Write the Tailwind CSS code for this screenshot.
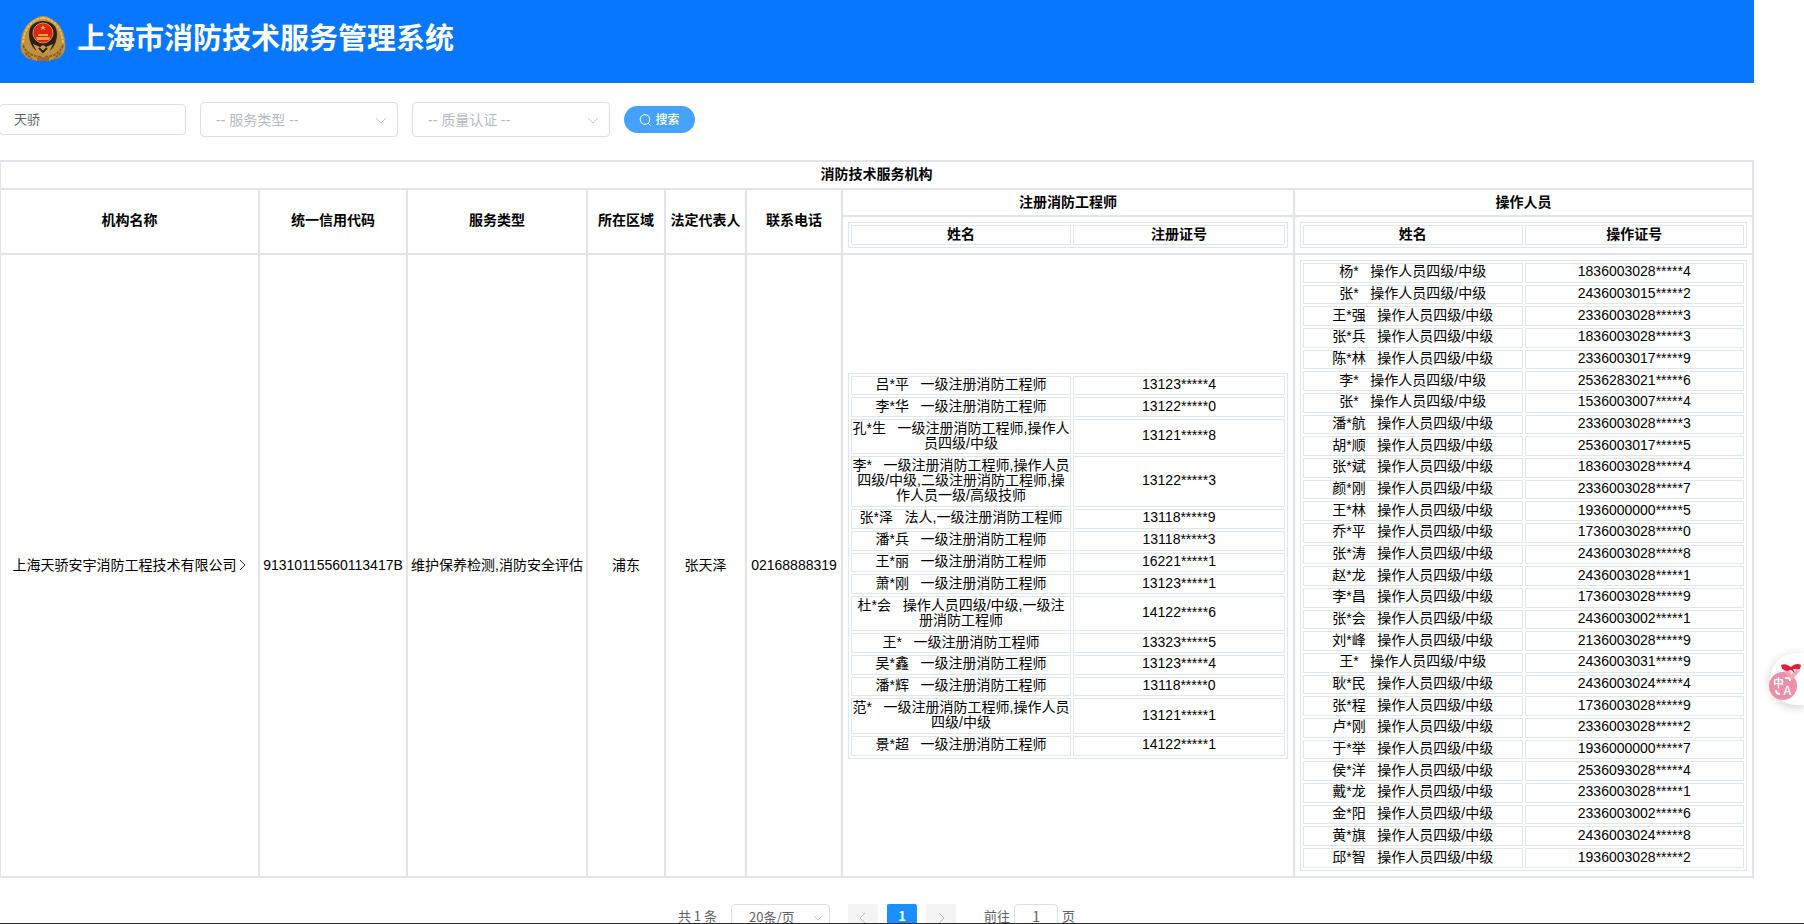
<!DOCTYPE html>
<html lang="zh-CN">

<head>
  <meta charset="UTF-8">
  <meta name="viewport" content="width=device-width, initial-scale=1.0">
  <title>上海市消防技术服务管理系统</title>
  <script src="https://cdn.jsdelivr.net/npm/@tailwindcss/browser@4"></script>
</head>

<body class="h-screen overflow-hidden bg-white pr-[50px] font-['Liberation_Sans','Noto_Sans_CJK_SC',sans-serif] text-sm text-black">

  <!-- Header -->
  <header class="flex h-[83px] items-center bg-[#0777ff] pb-1.5 pl-5 text-white">
    <svg class="h-[46px] w-[46px]" viewBox="0 0 46 46" aria-hidden="true">
      <path d="M23 0C27 0 30 2 33 4C40 8 45 17 45 26C46 31 45 37 41 40C38 44 32 43 29 45H17C13 43 8 44 5 40C1 37 0 31 1 26C1 17 6 8 13 4C16 2 19 0 23 0Z" fill="#c0913e" />
      <path d="M23 2C11 3 4 14 3 27M23 2C35 3 42 14 43 27" fill="none" stroke="#e5bd62" stroke-width="2" stroke-dasharray="3 1" />
      <path d="M23 5C31 5 37 10 37 18C37 28 32 35 23 39C14 35 9 28 9 18C9 10 15 5 23 5Z" fill="#2b211c" />
      <circle cx="23" cy="17" r="10" fill="#df2416" stroke="#d29a45" stroke-width="1" />
      <path d="M23 9L24 11H26L24 12L25 14L23 13L21 14L22 12L20 11H22Z" fill="#ffb03c" />
      <path d="M16 21H30L29 24H17ZM18 18H28V20H18Z" fill="#ffa044" />
      <path d="M13 28L20 31L23 29L26 31L33 28L29 36L23 39L17 36Z" fill="#c79b4c" />
      <path d="M19 32L23 36L27 32" fill="none" stroke="#2b211c" stroke-width="2" />
      <path d="M3 29C6 38 13 40 21 41M43 29C40 38 33 40 25 41M5 37L12 43M41 37L34 43" fill="none" stroke="#8b5e26" stroke-width="2" stroke-dasharray="3 1" />
      <path d="M17 41H29V45H17Z" fill="#a8642a" />
    </svg>
    <h1 class="ml-[11px] text-[29px] font-bold leading-10">上海市消防技术服务管理系统</h1>
  </header>

  <main class="-ml-px">
    <!-- Search -->
    <form class="flex items-center pt-[19px]" onsubmit="return false">
      <input type="text" value="天骄" aria-label="机构名称"
        class="h-[31px] w-[187px] rounded border border-[#dcdfe6] px-3.5 pb-0.5 text-[13px] text-[#606266] outline-none">
      <div class="relative ml-3.5">
        <select aria-label="服务类型"
          class="h-[35px] w-[198px] appearance-none rounded border border-[#dcdfe6] bg-white px-[15px] text-sm text-[#b4b9c3] outline-none">
          <option>-- 服务类型 --</option>
        </select>
        <svg class="pointer-events-none absolute right-3 top-3.5 h-2.5 w-2.5" viewBox="0 0 10 10" fill="none" stroke="#c0c4cc"><path d="M0 2L5 7L10 2" /></svg>
      </div>
      <div class="relative ml-3.5">
        <select aria-label="质量认证"
          class="h-[35px] w-[198px] appearance-none rounded border border-[#dcdfe6] bg-white px-[15px] text-sm text-[#b4b9c3] outline-none">
          <option>-- 质量认证 --</option>
        </select>
        <svg class="pointer-events-none absolute right-3 top-3.5 h-2.5 w-2.5" viewBox="0 0 10 10" fill="none" stroke="#c0c4cc"><path d="M0 2L5 7L10 2" /></svg>
      </div>
      <button type="submit"
        class="ml-3.5 flex h-[27px] w-[71px] items-center justify-center gap-1 rounded-full bg-[#46a2ff] text-xs font-medium text-white">
        <svg class="h-3 w-3" viewBox="0 0 12 12" fill="none" stroke="currentColor"><circle cx="6" cy="5.5" r="4.8" /><path d="M9 9L11.5 11.5" /></svg>
        搜索
      </button>
    </form>

    <!-- Result table -->
    <table class="mt-[23px] w-full table-fixed border-collapse border-2 border-[#e1e5e9] text-center">
      <colgroup>
        <col class="w-[259px]">
        <col class="w-[148px]">
        <col class="w-[180px]">
        <col class="w-[78px]">
        <col class="w-[81px]">
        <col class="w-[96px]">
        <col class="w-[452px]">
        <col>
      </colgroup>
      <thead class="[&_th]:leading-4">
        <tr>
          <th colspan="8" class="border-2 border-[#e1e5e9] pb-1.5 pt-1">消防技术服务机构</th>
        </tr>
        <tr>
          <th rowspan="2" class="border-2 border-[#e1e5e9] pb-1">机构名称</th>
          <th rowspan="2" class="border-2 border-[#e1e5e9] pb-1">统一信用代码</th>
          <th rowspan="2" class="border-2 border-[#e1e5e9] pb-1">服务类型</th>
          <th rowspan="2" class="border-2 border-[#e1e5e9] pb-1">所在区域</th>
          <th rowspan="2" class="border-2 border-[#e1e5e9] pb-1">法定代表人</th>
          <th rowspan="2" class="border-2 border-[#e1e5e9] pb-1">联系电话</th>
          <th class="border-2 border-[#e1e5e9] pb-[5px] pt-1">注册消防工程师</th>
          <th class="border-2 border-[#e1e5e9] pb-[5px] pt-1">操作人员</th>
        </tr>
        <tr>
          <th class="border-2 border-[#e1e5e9] p-[5px]">
            <table class="w-full table-fixed border-separate border-spacing-[2px] border border-[#dfe6ec]">
              <tr>
                <th class="w-[220px] border border-[#dfe6ec] pb-0.5">姓名</th>
                <th class="border border-[#dfe6ec] pb-0.5">注册证号</th>
              </tr>
            </table>
          </th>
          <th class="border-2 border-[#e1e5e9] p-[5px]">
            <table class="w-full table-fixed border-separate border-spacing-[2px] border border-[#dfe6ec]">
              <tr>
                <th class="border border-[#dfe6ec] pb-0.5">姓名</th>
                <th class="border border-[#dfe6ec] pb-0.5">操作证号</th>
              </tr>
            </table>
          </th>
        </tr>
      </thead>
      <tbody>
        <tr>
          <td class="border-2 border-[#e1e5e9] pb-0.5">
            <a href="#" class="inline-flex items-center gap-0.5 whitespace-nowrap">上海天骄安宇消防工程技术有限公司
              <svg class="h-3 w-2" viewBox="0 0 8 12" fill="none" stroke="#333"><path d="M1 1L6 6L1 11" /></svg>
            </a>
          </td>
          <td class="border-2 border-[#e1e5e9] pb-0.5">91310115560113417B</td>
          <td class="border-2 border-[#e1e5e9] pb-0.5">维护保养检测,消防安全评估</td>
          <td class="border-2 border-[#e1e5e9] pb-0.5">浦东</td>
          <td class="border-2 border-[#e1e5e9] pb-0.5">张天泽</td>
          <td class="border-2 border-[#e1e5e9] pb-0.5">02168888319</td>
          <td class="border-2 border-[#e1e5e9] p-[5px]">
            <table class="h-[386px] w-full table-fixed border-separate border-spacing-[2px] border border-[#dfe6ec] leading-[15px]">
              <colgroup>
                <col class="w-[220px]">
                <col>
              </colgroup>
              <tbody id="engineers"></tbody>
            </table>
          </td>
          <td class="border-2 border-[#e1e5e9] p-[5px]">
            <table class="h-[611px] w-full table-fixed border-separate border-spacing-[2px] border border-[#dfe6ec] leading-[15px]">
              <tbody id="operators"></tbody>
            </table>
          </td>
        </tr>
      </tbody>
    </table>

    <!-- Pagination -->
    <nav class="mt-[26px] flex items-center justify-center font-['Noto_Sans_CJK_SC',sans-serif] text-[#606266]" aria-label="分页">
      <span class="pb-1 text-[13px]">共 1 条</span>
      <div class="relative ml-3.5">
        <select aria-label="每页条数"
          class="h-7 w-[99px] appearance-none rounded border border-[#dcdfe6] bg-white pb-0.5 pl-[17px] text-[13px] text-[#606266] outline-none">
          <option>20条/页</option>
        </select>
        <svg class="pointer-events-none absolute right-2 top-2.5 h-2 w-2" viewBox="0 0 8 8" fill="none" stroke="#c0c4cc"><path d="M0 2L4 6L8 2" /></svg>
      </div>
      <button type="button" aria-label="上一页" disabled class="ml-[18px] flex h-7 w-[30px] items-center justify-center rounded-xs bg-[#f4f4f5]">
        <svg class="h-2.5 w-2" viewBox="0 0 8 10" fill="none" stroke="#b8bcc4"><path d="M6 0L1 5L6 10" /></svg>
      </button>
      <button type="button" class="ml-[9px] h-7 w-[30px] rounded-xs bg-[#1890ff] pb-1 text-[13px] font-bold text-white">1</button>
      <button type="button" aria-label="下一页" disabled class="ml-[9px] flex h-7 w-[30px] items-center justify-center rounded-xs bg-[#f4f4f5]">
        <svg class="h-2.5 w-2" viewBox="0 0 8 10" fill="none" stroke="#b8bcc4"><path d="M2 0L7 5L2 10" /></svg>
      </button>
      <label for="jump" class="ml-7 pb-1 text-[13px]">前往</label>
      <input id="jump" type="text" value="1" class="mx-1 h-7 w-11 rounded border border-[#dcdfe6] pb-1 text-center outline-none">
      <span class="pb-1 text-[13px]">页</span>
    </nav>
  </main>

  <!-- Translate widget -->
  <button type="button" aria-label="翻译" class="fixed right-0 top-[653px] h-[52px] w-[34px] rounded-l-[26px] bg-white shadow-[0_2px_10px_rgba(0,0,0,0.2)]">
    <svg class="absolute -left-1 top-2 h-10 w-[38px]" viewBox="0 0 38 40">
      <circle cx="17" cy="25" r="14" fill="#ec8fa8" />
      <path d="M19 8L26 16L33 8" fill="none" stroke="#f4a9b5" stroke-width="4" />
      <path d="M15 4C19 2 22 4 25 6C28 3 32 2 35 4L34 8C31 8 29 8 27 8L29 12L25 9L21 10L16 8Z" fill="#df1f3c" />
      <text x="7" y="26" font-size="11" font-weight="bold" fill="#fff">中</text>
      <text x="17" y="34" font-size="12" font-weight="bold" fill="#fff">A</text>
      <path d="M19 17H22Q24 17 24 20M10 29Q10 33 14 33" fill="none" stroke="#fff" stroke-width="2" />
    </svg>
  </button>
  <div class="fixed inset-x-0 bottom-0 h-px bg-[#2b2b2b]"></div>

  <script>
    const op = '操作人员四级/中级';
    const eng = '一级注册消防工程师';

    const engineers = [
      ['吕*平', eng, '13123*****4'],
      ['李*华', eng, '13122*****0'],
      ['孔*生', eng + ',' + op, '13121*****8'],
      ['李*', eng + ',' + op + ',二级注册消防工程师,操作人员一级/高级技师', '13122*****3'],
      ['张*泽', '法人,' + eng, '13118*****9'],
      ['潘*兵', eng, '13118*****3'],
      ['王*丽', eng, '16221*****1'],
      ['萧*刚', eng, '13123*****1'],
      ['杜*会', op + ',' + eng, '14122*****6'],
      ['王*', eng, '13323*****5'],
      ['吴*鑫', eng, '13123*****4'],
      ['潘*辉', eng, '13118*****0'],
      ['范*', eng + ',' + op, '13121*****1'],
      ['景*超', eng, '14122*****1'],
    ];

    const operators = [
      ['杨*', op, '1836003028*****4'],
      ['张*', op, '2436003015*****2'],
      ['王*强', op, '2336003028*****3'],
      ['张*兵', op, '1836003028*****3'],
      ['陈*林', op, '2336003017*****9'],
      ['李*', op, '2536283021*****6'],
      ['张*', op, '1536003007*****4'],
      ['潘*航', op, '2336003028*****3'],
      ['胡*顺', op, '2536003017*****5'],
      ['张*斌', op, '1836003028*****4'],
      ['颜*刚', op, '2336003028*****7'],
      ['王*林', op, '1936000000*****5'],
      ['乔*平', op, '1736003028*****0'],
      ['张*涛', op, '2436003028*****8'],
      ['赵*龙', op, '2436003028*****1'],
      ['李*昌', op, '1736003028*****9'],
      ['张*会', op, '2436003002*****1'],
      ['刘*峰', op, '2136003028*****9'],
      ['王*', op, '2436003031*****9'],
      ['耿*民', op, '2436003024*****4'],
      ['张*程', op, '1736003028*****9'],
      ['卢*刚', op, '2336003028*****2'],
      ['于*举', op, '1936000000*****7'],
      ['侯*洋', op, '2536093028*****4'],
      ['戴*龙', op, '2336003028*****1'],
      ['金*阳', op, '2336003002*****6'],
      ['黄*旗', op, '2436003024*****8'],
      ['邱*智', op, '1936003028*****2'],
    ];

    function renderRows(id, rows) {
      document.getElementById(id).innerHTML = rows.map(([name, role, no]) => `
        <tr>
          <td class="border border-[#dfe6ec] pb-0.5">${name}&nbsp;&nbsp; ${role}</td>
          <td class="border border-[#dfe6ec] pb-0.5">${no}</td>
        </tr>`).join('');
    }

    renderRows('engineers', engineers);
    renderRows('operators', operators);
  </script>
</body>

</html>
